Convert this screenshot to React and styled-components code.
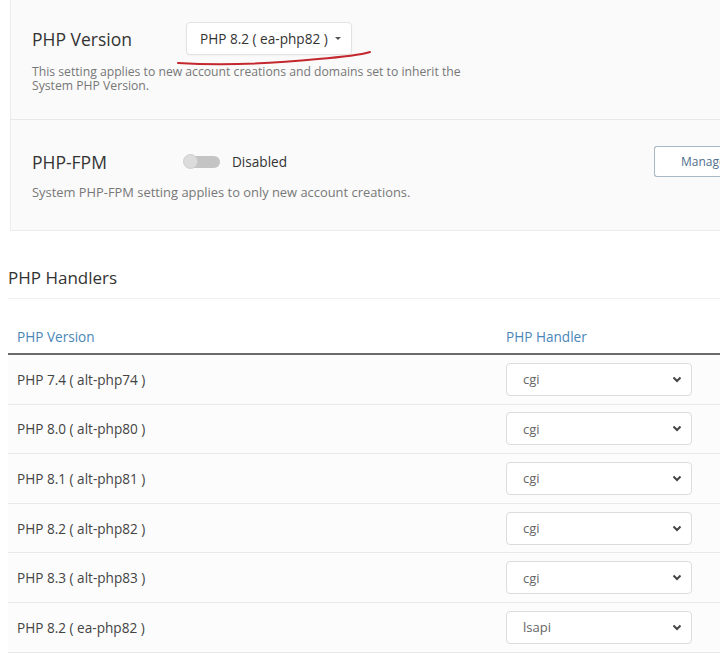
import React from "react";
import styled, { createGlobalStyle } from "styled-components";

const GlobalStyle = createGlobalStyle`
  html, body {
    margin: 0;
    padding: 0;
    background: #fff;
    overflow: hidden;
  }
  body {
    font-family: "Open Sans", "Liberation Sans", sans-serif;
    color: #333;
  }
`;

const Page = styled.div`
  width: 760px;
  padding: 0 0 0 8px;
`;

const Panel = styled.div`
  margin-left: 2px;
  background: #fafafa;
  border: 1px solid #ececec;
  border-top: none;
  border-right: none;
`;

const Section = styled.div`
  position: relative;
  padding: ${(p) => p.$pad};
  border-bottom: ${(p) => (p.$last ? "none" : "1px solid #e8e8e8")};
`;

const SettingRow = styled.div`
  display: flex;
  align-items: center;
  height: ${(p) => p.$h}px;
`;

const Label = styled.div`
  width: 152px;
  font-size: 17.5px;
  color: #333;
`;

const DropButton = styled.div`
  box-sizing: border-box;
  width: 166px;
  height: 33px;
  margin-left: 2px;
  display: flex;
  align-items: center;
  padding-left: 13px;
  background: #fff;
  border: 1px solid #e2e2e2;
  border-radius: 4px;
  font-size: 13.6px;
  color: #333;
  white-space: nowrap;
  box-shadow: 0 1px 2px rgba(0, 0, 0, 0.04);
`;

const Caret = styled.span`
  margin-left: 7px;
  width: 0;
  height: 0;
  border-left: 3px solid transparent;
  border-right: 3px solid transparent;
  border-top: 3px solid #555;
`;

const Description = styled.div`
  margin-top: ${(p) => p.$gap}px;
  width: 472px;
  font-size: ${(p) => p.$size}px;
  line-height: 14px;
  color: #777;
`;

const Toggle = styled.div`
  position: relative;
  width: 36px;
  height: 12px;
  border-radius: 6px;
  background: #c4c4c4;
`;

const Knob = styled.div`
  position: absolute;
  left: -1px;
  top: -2px;
  width: 15px;
  height: 15px;
  border-radius: 50%;
  background: #dcdcdc;
  border: 1px solid #cfcfcf;
  box-sizing: border-box;
`;

const ToggleText = styled.span`
  margin-left: 12px;
  font-size: 13.6px;
  color: #333;
`;

const Spacer = styled.div`
  flex: 1;
`;

const ManageButton = styled.div`
  box-sizing: border-box;
  height: 31px;
  width: 100px;
  margin-right: 14px;
  display: flex;
  align-items: center;
  padding-left: 26px;
  background: #fff;
  border: 1px solid #a9b8c6;
  border-right: none;
  border-radius: 3px 0 0 3px;
  font-size: 12px;
  color: #4f6f8d;
  white-space: nowrap;
  overflow: hidden;
`;

const Annotation = styled.svg`
  position: absolute;
  left: 157px;
  top: 46px;
  pointer-events: none;
`;

const Heading = styled.h2`
  margin: 0;
  padding: 35px 0 9px;
  font-size: 17px;
  font-weight: 400;
  color: #333;
  border-bottom: 1px solid #f0f0f0;
`;

const Table = styled.div`
  margin-top: 11px;
`;

const HeadRow = styled.div`
  display: grid;
  grid-template-columns: 498px 1fr;
  align-items: center;
  height: 43px;
  border-bottom: 2px solid #6a6a6a;
`;

const HeadCell = styled.div`
  padding-left: ${(p) => (p.$first ? 9 : 0)}px;
  padding-top: 9px;
  font-size: 13.6px;
  color: #4a86b7;
`;

const Row = styled.div`
  display: grid;
  grid-template-columns: 498px 1fr;
  align-items: center;
  height: 48.6px;
  background: #fcfcfc;
  border-bottom: 1px solid #e9e9e9;
`;

const Cell = styled.div`
  padding-left: 9px;
  font-size: 13.6px;
  color: #444;
`;

const Select = styled.div`
  box-sizing: border-box;
  width: 186px;
  height: 33px;
  display: flex;
  align-items: center;
  justify-content: space-between;
  padding: 0 9px 0 16px;
  background: #fff;
  border: 1px solid #dcdcdc;
  border-radius: 4px;
  font-size: 13px;
  color: #666;
`;

const Chevron = () => (
  <svg width="10" height="7" viewBox="0 0 10 7">
    <path d="M1.5 1.5 L5 5 L8.5 1.5" fill="none" stroke="#444" strokeWidth="2" />
  </svg>
);

const handlers = [
  { version: "PHP 7.4 ( alt-php74 )", handler: "cgi" },
  { version: "PHP 8.0 ( alt-php80 )", handler: "cgi" },
  { version: "PHP 8.1 ( alt-php81 )", handler: "cgi" },
  { version: "PHP 8.2 ( alt-php82 )", handler: "cgi" },
  { version: "PHP 8.3 ( alt-php83 )", handler: "cgi" },
  { version: "PHP 8.2 ( ea-php82 )", handler: "lsapi" },
];

const App = () => {
  return (
    <Page>
      <GlobalStyle />
      <Panel>
        <Section $pad="22px 0 26px 21px">
          <SettingRow $h={33}>
            <Label>PHP Version</Label>
            <DropButton>
              PHP 8.2 ( ea-php82 )
              <Caret />
            </DropButton>
          </SettingRow>
          <Description $gap={10} $size={12.2}>
            This setting applies to new account creations and domains set to
            inherit the System PHP Version.
          </Description>
          <Annotation width="210" height="24" viewBox="0 0 210 24">
            <path
              d="M10 17 C 60 20, 110 17, 150 13 C 175 11, 192 9, 202 6"
              fill="none"
              stroke="#c3282e"
              strokeWidth="2"
              strokeLinecap="round"
            />
          </Annotation>
        </Section>
        <Section $pad="26px 0 31px 21px" $last>
          <SettingRow $h={31}>
            <Label>PHP-FPM</Label>
            <Toggle>
              <Knob />
            </Toggle>
            <ToggleText>Disabled</ToggleText>
            <Spacer />
            <ManageButton>Manage</ManageButton>
          </SettingRow>
          <Description $gap={8} $size={12.9}>
            System PHP-FPM setting applies to only new account creations.
          </Description>
        </Section>
      </Panel>

      <Heading>PHP Handlers</Heading>

      <Table>
        <HeadRow>
          <HeadCell $first>PHP Version</HeadCell>
          <HeadCell>PHP Handler</HeadCell>
        </HeadRow>
        {handlers.map((h) => (
          <Row key={h.version}>
            <Cell>{h.version}</Cell>
            <Select>
              {h.handler}
              <Chevron />
            </Select>
          </Row>
        ))}
      </Table>
    </Page>
  );
};

export default App;
